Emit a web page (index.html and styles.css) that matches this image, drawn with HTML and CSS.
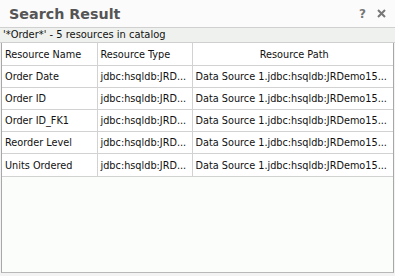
FILE: index.html
```html
<!DOCTYPE html>
<html>
<head>
<meta charset="utf-8">
<link rel="stylesheet" href="styles.css">
</head>
<body>
<div class="panel">
  <div class="titlebar">
    <span class="title">Search Result</span>
    <span class="tools">
      <span class="help">?</span>
      <svg class="close" width="9" height="9" viewBox="0 0 9 9"><path d="M1 1 L8 8 M8 1 L1 8" stroke="#777" stroke-width="2" fill="none"/></svg>
    </span>
  </div>
  <div class="subtitle">'*Order*' - 5 resources in catalog</div>
  <div class="tablewrap">
    <table class="grid">
      <colgroup><col class="c1"><col class="c2"><col class="c3"></colgroup>
      <thead>
        <tr><th>Resource Name</th><th>Resource Type</th><th class="center">Resource Path</th></tr>
      </thead>
      <tbody>
        <tr><td>Order Date</td><td>jdbc:hsqldb:JRD...</td><td>Data Source 1.jdbc:hsqldb:JRDemo15...</td></tr>
        <tr><td>Order ID</td><td>jdbc:hsqldb:JRD...</td><td>Data Source 1.jdbc:hsqldb:JRDemo15...</td></tr>
        <tr><td>Order ID_FK1</td><td>jdbc:hsqldb:JRD...</td><td>Data Source 1.jdbc:hsqldb:JRDemo15...</td></tr>
        <tr><td>Reorder Level</td><td>jdbc:hsqldb:JRD...</td><td>Data Source 1.jdbc:hsqldb:JRDemo15...</td></tr>
        <tr><td>Units Ordered</td><td>jdbc:hsqldb:JRD...</td><td>Data Source 1.jdbc:hsqldb:JRDemo15...</td></tr>
      </tbody>
    </table>
  </div>
</div>
</body>
</html>
```
FILE: styles.css
```css
html, body {
  margin: 0;
  padding: 0;
  background: #f3f3f3;
}
body {
  width: 395px;
  height: 276px;
  overflow: hidden;
  font-family: "DejaVu Sans Condensed", "DejaVu Sans", sans-serif;
  font-size: 10.8px;
  color: #111;
}
.panel {
  display: flex;
  flex-direction: column;
  height: 273px;
}
.titlebar {
  height: 27px;
  border-bottom: 1px solid #d0d0d0;
  background: #fcfbfc;
  display: flex;
  align-items: center;
  justify-content: space-between;
  padding: 0 9px 0 9px;
}
.title {
  font-family: "DejaVu Sans", sans-serif;
  font-weight: bold;
  font-size: 14.3px;
  color: #555;
}
.tools {
  display: flex;
  align-items: center;
  gap: 11px;
  color: #777;
}
.help {
  font-family: "DejaVu Sans", sans-serif;
  font-weight: bold;
  font-size: 12px;
}
.close {
  display: block;
}
.subtitle {
  height: 14px;
  line-height: 14px;
  background: #eff1ee;
  border-bottom: 1px solid #cfcfcf;
  padding-left: 3px;
  font-size: 11px;
}
.tablewrap {
  flex: 1;
  margin-left: 1px;
  width: 391px;
  border-left: 1px solid #a8a8a8;
  border-right: 1px solid #a8a8a8;
  border-bottom: 1px solid #b8b8b8;
  background: #fbfdfb;
}
.grid {
  width: 100%;
  border-collapse: collapse;
  table-layout: fixed;
}
.c1 { width: 95px; }
.c2 { width: 95px; }
.grid th, .grid td {
  height: 21px;
  padding: 0 0 0 3px;
  border-right: 1px solid #d2d2d2;
  border-bottom: 1px solid #d2d2d2;
  white-space: nowrap;
  overflow: hidden;
  text-align: left;
  font-weight: normal;
  background: #fff;
}
.grid th { height: 22px; }
.grid tr:last-child td { height: 22px; }
.grid th:last-child, .grid td:last-child { border-right: none; }
.grid th.center { text-align: center; }
```
